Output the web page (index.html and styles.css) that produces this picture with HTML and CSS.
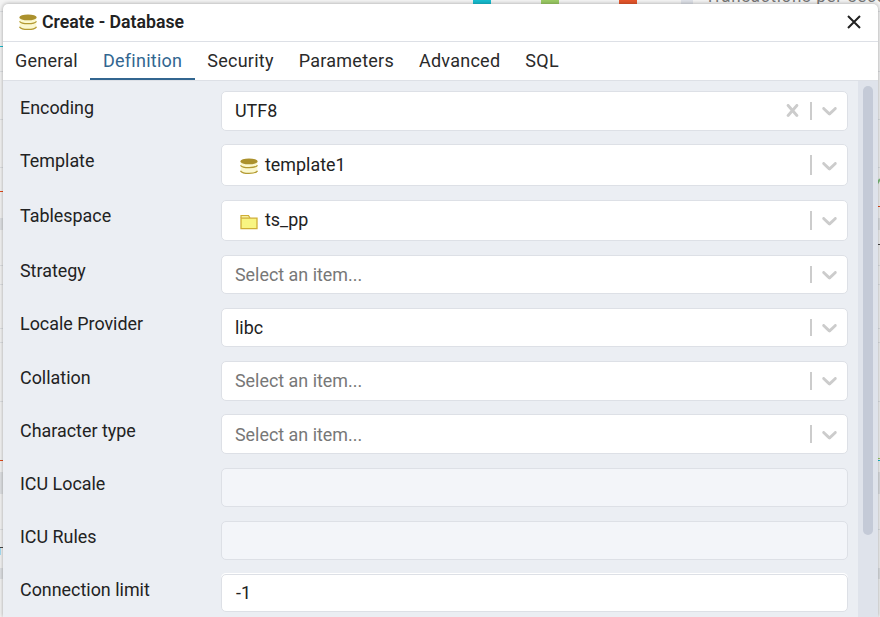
FILE: index.html
```html
<!DOCTYPE html>
<html lang="en">
<head>
<meta charset="utf-8">
<title>Create - Database</title>
<link rel="stylesheet" href="styles.css">
</head>
<body>
<svg width="0" height="0" class="defs" aria-hidden="true">
  <symbol id="db" viewBox="0 0 18 17">
    <path d="M.7 3v10.2c0 1.500 3.700 2.700 8.300 2.700s8.300-1.200 8.300-2.700V3z" fill="#fbf8cf"/>
    <path d="M.5 7.300c1 1.500 4.200 2.300 8.500 2.300s7.500-.8 8.500-2.300M.5 12.800c1 1.700 4.200 2.600 8.500 2.600s7.500-.9 8.500-2.600" fill="none" stroke="#b39a33" stroke-width="1.200"/>
    <ellipse cx="9" cy="3.400" rx="8.700" ry="2.900" fill="#ab912d"/>
  </symbol>
  <symbol id="folder" viewBox="0 0 18 16">
    <path d="M1 4V1.500h7.500l1.500 2.500" fill="#f6efa0" stroke="#cfae35" stroke-width="1.200"/>
    <path d="M1 4.200h16v10.500H1z" fill="#f8f581" stroke="#cfae35" stroke-width="1.300"/>
  </symbol>
  <symbol id="chev" viewBox="0 0 20 20">
    <path d="M4.516 7.548c0.436-0.446 1.043-0.481 1.576 0l3.908 3.747 3.908-3.747c0.533-0.481 1.141-0.446 1.574 0 0.436 0.445 0.408 1.197 0 1.615-0.406 0.418-4.695 4.502-4.695 4.502-0.217 0.223-0.502 0.335-0.787 0.335s-0.570-0.112-0.789-0.335c0 0-4.287-4.084-4.695-4.502s-0.436-1.170 0-1.615z"/>
  </symbol>
</svg>
<div class="page">
  <svg class="chart" width="880" height="617" aria-hidden="true">
    <path fill="#16bdd0" d="M473 0h18v5h-18z"/><path fill="#9ccc65" d="M541 0h18v5h-18z"/><path fill="#e6562b" d="M619 0h18v5h-18z"/><path fill="#dfe2e9" d="M681 0h12v5h-12z"/>
    <path fill="#e0e2e5" d="M0 218h880v12H0zM0 472h880v22H0zM0 568h880v11H0z"/>
    <path stroke="#dfe1e4" d="M0 11.500h880M0 71.500h880M0 119.500h880M0 167.500h880M0 265.500h880M0 284.500h880M0 328.500h880M0 342.500h880M0 401.500h880M0 529.500h880"/>
    <path stroke="#16bdd0" d="M0 46.500h4M877 460.500h3"/>
    <path stroke="#e64a19" d="M0 191.500h4M0 460.500h4M877 206.500h3"/>
    <path stroke="#7fbf7b" stroke-width="2" d="M877 184l3-5"/>
    <path stroke="#9ccc65" d="M877 458.500h3"/>
    <path stroke="#444" d="M877 244.500h3M0 547.500h3"/>
    <path fill="#a5def5" d="M0 548h1v7H0z"/>
  </svg>
  <div class="behind">Transactions per second</div>
</div>
<main class="dialog">
  <header class="title"><svg width="18" height="17"><use href="#db"/></svg><h1>Create - Database</h1>
    <svg class="close" width="14" height="14" viewBox="0 0 14 14"><path d="M1 1l12 12M13 1L1 13"/></svg></header>
  <nav class="tabs"><a>General</a><a class="active">Definition</a><a>Security</a><a>Parameters</a><a>Advanced</a><a>SQL</a></nav>
  <section class="body">
    <div class="form">
      <label class="low">Encoding</label><div class="field raised first"><span>UTF8</span><svg class="clear" width="25" height="25" viewBox="0 0 20 20"><path d="M14.348 14.849c-0.469 0.469-1.229 0.469-1.697 0l-2.651-3.030-2.651 3.029c-0.469 0.469-1.229 0.469-1.697 0-0.469-0.469-0.469-1.229 0-1.697l2.758-3.150-2.759-3.152c-0.469-0.469-0.469-1.228 0-1.697s1.228-0.469 1.697 0l2.652 3.031 2.651-3.031c0.469-0.469 1.228-0.469 1.697 0s0.469 1.229 0 1.697l-2.758 3.152 2.758 3.150c0.469 0.469 0.469 1.229 0 1.698z"/></svg><i></i><svg class="arrow"><use href="#chev"/></svg></div>
      <label class="low">Template</label><div class="field raised"><svg class="item" width="18" height="17"><use href="#db"/></svg><span>template1</span><i></i><svg class="arrow"><use href="#chev"/></svg></div>
      <label>Tablespace</label><div class="field raised"><svg class="item" width="18" height="16"><use href="#folder"/></svg><span>ts_pp</span><i></i><svg class="arrow"><use href="#chev"/></svg></div>
      <label>Strategy</label><div class="field empty"><span>Select an item...</span><i></i><svg class="arrow"><use href="#chev"/></svg></div>
      <label>Locale Provider</label><div class="field"><span>libc</span><i></i><svg class="arrow"><use href="#chev"/></svg></div>
      <label class="low">Collation</label><div class="field empty raised first"><span>Select an item...</span><i></i><svg class="arrow"><use href="#chev"/></svg></div>
      <label class="low">Character type</label><div class="field empty"><span>Select an item...</span><i></i><svg class="arrow"><use href="#chev"/></svg></div>
      <label>ICU Locale</label><div class="field disabled"></div>
      <label>ICU Rules</label><div class="field disabled"></div>
      <label>Connection limit</label><div class="field number raised"><span>-1</span></div>
    </div>
    <div class="scroll"><div class="thumb"></div></div>
  </section>
</main>
</body>
</html>
```
FILE: styles.css
```css
* { box-sizing: border-box; }
body { margin: 0; width: 880px; height: 617px; overflow: hidden; font-family: Roboto, sans-serif; font-size: 17.900px; color: #222; }
.defs { position: absolute; }
.page { position: absolute; inset: 0; background: #f4f4f4; overflow: hidden; }
.chart { display: block; }
.behind { position: absolute; left: 705px; top: -12px; font-size: 17px; line-height: 17px; white-space: nowrap; letter-spacing: .7px; color: #777; }
.dialog { position: absolute; left: 3px; top: 4px; width: 875px; height: 613px; background: #fff; border-radius: 5px 5px 0 0; overflow: hidden; box-shadow: 0 0 4px rgba(0,0,0,.35); display: flex; flex-direction: column; }
.title { height: 38px; flex: none; display: flex; align-items: center; padding: 0 17px 1px 16px; border-bottom: 1px solid #dde0e6; }
h1 { font-size: 17.700px; font-weight: 600; margin: 0 0 0 5px; line-height: 24px; }
.close { margin-left: auto; fill: none; stroke: #222; stroke-width: 2; }
.tabs { height: 39px; flex: none; display: flex; margin-left: -.5px; border-bottom: 1px solid #dde0e6; font-size: 18px; line-height: 38px; letter-spacing: .25px; color: #2a2a2a; }
.tabs a { padding: 0 12.500px; height: 38px; }
.tabs .active { color: #326690; border-bottom: 2px solid #326690; }
.body { flex: 1; min-height: 0; background: #ebeef3; display: flex; justify-content: space-between; }
.form { width: 845px; padding: 10px 0 0 17px; display: grid; grid-template-columns: 201px 627px; grid-template-rows: 53px 56px 55px 53px 53px 53px 54px 53px 53px 38px; align-items: start; }
.form label { line-height: 32px; }
.form .low { line-height: 34px; }
.field { background: #fff; border: 1px solid #dde0e6; border-radius: 5px; display: flex; align-items: center; height: 39px; padding-left: 13px; }
.field:nth-of-type(1), .field:nth-of-type(6), .field:nth-of-type(7) { height: 40px; }
.field:nth-of-type(2) { height: 42px; }
.field:nth-of-type(3) { height: 41px; }
.field i { width: 2px; align-self: stretch; margin: 10px 5px 10px auto; background: #ccc; }
.field svg { flex: none; }
.raised span { padding-bottom: 2px; }
.clear { margin-left: auto; fill: #ccc; }
.field .clear + i { margin-left: 5px; }
.arrow { width: 25px; height: 25px; margin-right: 5px; fill: #ccc; }
.first .arrow, .first .clear { margin-bottom: 1px; }
.item { margin: 2px 7px 0 5px; }
.empty span { color: #777; }
.disabled { background: #f3f5f9; }
.number { height: 38px; padding-left: 14px; box-shadow: 0 -1px #fff; }
.scroll { width: 20px; background: #dfe3eb; padding: 5px 5px; }
.thumb { width: 10px; height: 449px; border-radius: 5px; background: #c4cad7; }
```
